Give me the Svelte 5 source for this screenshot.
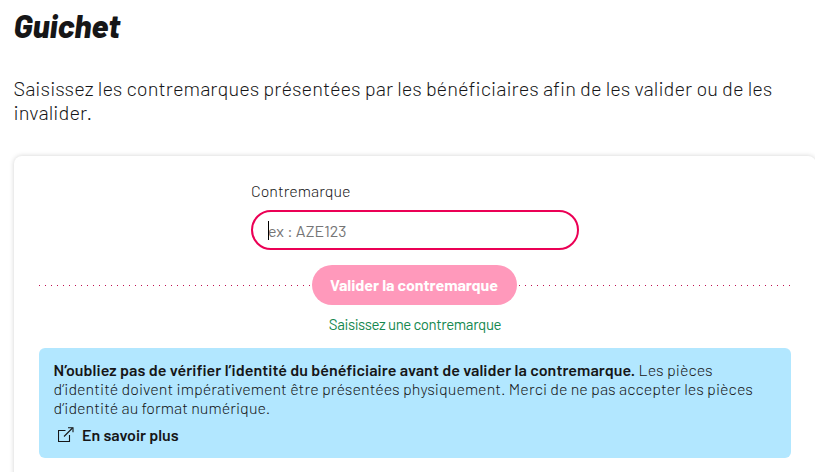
<script>
  import { onMount } from 'svelte';

  let token = '';
  let tokenInput;

  onMount(() => {
    tokenInput.focus();
  });
</script>

<main class="desk">
  <h1 class="title">Guichet</h1>
  <p class="advice">
    <span>Saisissez les contremarques présentées par les bénéficiaires afin de les valider ou de les</span>
    <span>invalider.</span>
  </p>

  <form class="card" on:submit|preventDefault>
    <div class="field">
      <label for="token">Contremarque</label>
      <div class="input-wrapper">
        {#if !token}<span class="caret"></span>{/if}
        <input id="token" type="text" placeholder="ex : AZE123" autocomplete="off" bind:value={token} bind:this={tokenInput} />
      </div>
    </div>

    <div class="submit-row">
      <span class="dots"></span>
      <button type="submit" disabled={!token}>Valider la contremarque</button>
      <span class="dots dots-right"></span>
    </div>

    <p class="message">Saisissez une contremarque</p>

    <div class="banner">
      <p class="banner-text">
        <span class="line"><strong>N’oubliez pas de vérifier l’identité du bénéficiaire avant de valider la contremarque.</strong> Les pièces</span>
        <span class="line">d’identité doivent impérativement être présentées physiquement. Merci de ne pas accepter les pièces</span>
        <span class="line">d’identité au format numérique.</span>
      </p>
      <a class="banner-link" href="#aide">
        <svg width="16" height="16" viewBox="0 0 16 16" fill="none" stroke="currentColor" stroke-width="1.1">
          <path d="M7.5 3.5H0.5V14.5H11.5V8" />
          <path d="M6 9.5L14.5 1" />
          <path d="M10 0.8H15V5.2" />
        </svg>
        <span>En savoir plus</span>
      </a>
    </div>
  </form>
</main>

<style>
  :global(body) {
    overflow: hidden;
    background: #fff;
  }

  .desk {
    box-sizing: border-box;
    width: 830px;
    height: 472px;
    padding: 8px 14px 0;
    overflow: hidden;
    color: #161617;
    font-family: Barlow, Roboto, sans-serif;
    font-weight: 300;
  }

  .title {
    margin: 0 0 0 -0.5px;
    font-size: 32px;
    line-height: 34px;
    font-weight: 800;
    font-style: italic;
  }

  .advice {
    margin: 34px 0 0 -0.5px;
    font-size: 20px;
    line-height: 24px;
    letter-spacing: 0.06px;
    white-space: nowrap;
  }

  .advice span {
    display: block;
  }

  .card {
    box-sizing: border-box;
    width: 802px;
    height: 360px;
    margin-top: 32px;
    padding: 25px 25px 0;
    border-radius: 8px;
    box-shadow: 0 0 5px rgba(0, 0, 0, 0.18);
  }

  .field {
    width: 328px;
    margin: 0 auto;
  }

  label {
    display: block;
    font-size: 16px;
    line-height: 19px;
  }

  .input-wrapper {
    position: relative;
    margin-top: 10px;
  }

  input {
    box-sizing: border-box;
    display: block;
    width: 328px;
    height: 40px;
    padding: 1px 15px 0;
    border: 2px solid #eb0055;
    border-radius: 20px;
    outline: none;
    background: #fff;
    color: #161617;
    caret-color: transparent;
    font-family: inherit;
    font-size: 16px;
  }

  input::placeholder {
    color: #757575;
    opacity: 1;
  }

  .caret {
    position: absolute;
    top: 11px;
    left: 17px;
    width: 1px;
    height: 19px;
    background: #000;
  }

  .submit-row {
    display: flex;
    align-items: center;
    margin-top: 15px;
  }

  .dots {
    flex: 1;
    height: 1px;
    background: repeating-linear-gradient(to right, #c01050 0 1px, transparent 1px 6px);
  }

  .dots-right {
    margin-left: 2px;
  }

  button {
    width: 205px;
    height: 40px;
    padding: 0 0 1px;
    border: none;
    border-radius: 20px;
    background: #ff99bb;
    color: #fff;
    font-family: inherit;
    font-size: 16px;
    font-weight: 700;
    letter-spacing: -0.05px;
    white-space: nowrap;
  }

  .message {
    margin: 9px 0 0;
    color: #15884f;
    font-size: 15px;
    line-height: 20px;
    font-weight: 400;
    letter-spacing: -0.4px;
    text-align: center;
  }

  .banner {
    box-sizing: border-box;
    height: 110px;
    margin-top: 14px;
    padding: 12px 15px;
    border-radius: 6px;
    background: #b2e7ff;
  }

  .banner-text {
    margin: 0 0 0 -0.5px;
    font-size: 16px;
    line-height: 19px;
    letter-spacing: 0.05px;
    white-space: nowrap;
  }

  .line {
    display: block;
  }

  strong {
    font-weight: 600;
    letter-spacing: 0.07px;
  }

  .banner-link {
    display: flex;
    align-items: center;
    gap: 8px;
    margin-top: 8px;
    padding-left: 4px;
    color: inherit;
    font-size: 16px;
    line-height: 20px;
    font-weight: 600;
    text-decoration: none;
  }
</style>
